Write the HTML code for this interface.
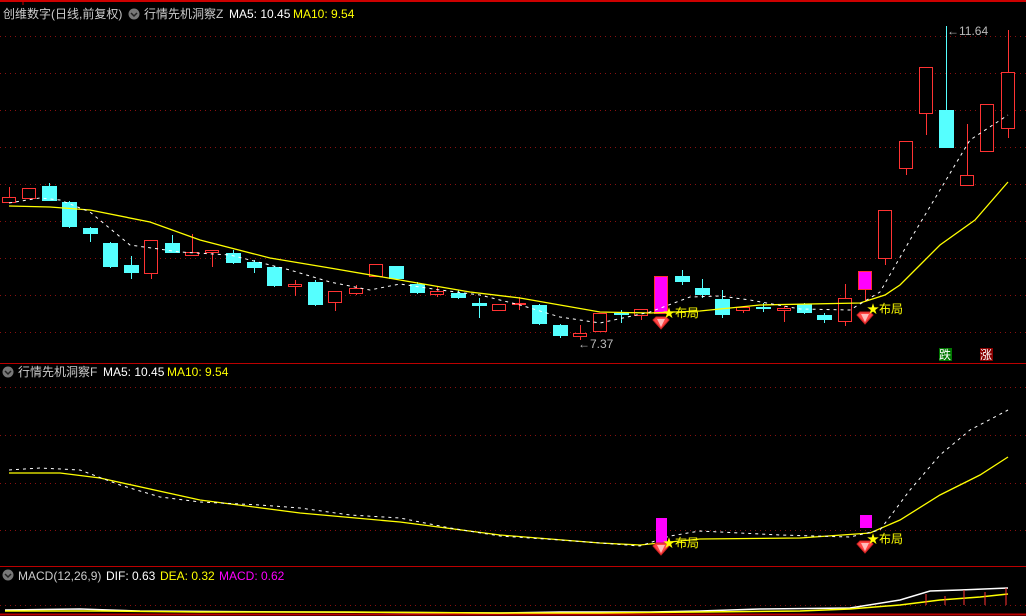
<!DOCTYPE html>
<html><head><meta charset="utf-8">
<style>
html,body{margin:0;padding:0;background:#000;width:1026px;height:616px;overflow:hidden;}
svg{display:block;}
text{font-family:"Liberation Sans","Noto Sans CJK SC",sans-serif;font-size:12px;}
</style></head><body>
<svg id="s" width="1026" height="616" xmlns="http://www.w3.org/2000/svg">
<rect width="1026" height="616" fill="#000"/>
<line x1="0" y1="1" x2="1026" y2="1" stroke="#c00" stroke-width="2"/>
<line x1="23" y1="0" x2="23" y2="5" stroke="#c00"/>
<g id="grid" stroke="#8a1010" stroke-dasharray="1,4"></g>
<line x1="0" y1="363.5" x2="1026" y2="363.5" stroke="#b00"/>
<line x1="0" y1="566.5" x2="1026" y2="566.5" stroke="#b00"/>
<line x1="0" y1="614.5" x2="1026" y2="614.5" stroke="#b00" stroke-width="2"/>
<g id="c"></g>
<polyline fill="none" stroke="#ff0" stroke-width="1.3" points="9,206 50,207 90,210 150,222 200,240 270,258 330,268 400,280 470,292 520,298 560,305 600,312 650,313 700,311 760,305 860,303 885,295 900,285 920,265 940,245 975,220 1008,182"/>
<polyline fill="none" stroke="#fff" stroke-dasharray="3,4" points="9,203 40,198 60,200 90,212 130,245 180,252 230,255 290,270 330,282 370,290 400,284 440,290 480,295 520,305 560,317 600,323 650,312 690,297 720,296 750,300 800,309 850,310 880,292 910,240 940,190 970,140 1008,115"/>
<polyline fill="none" stroke="#ff0" stroke-width="1.3" points="9,473 60,473 100,478 200,500 300,513 400,522 500,535 600,543 640,545 700,539 800,538 870,533 900,520 940,495 980,475 1008,457"/>
<polyline fill="none" stroke="#fff" stroke-dasharray="3,4" points="9,470 40,468 80,470 120,485 160,497 200,502 260,505 300,508 350,515 400,518 450,528 500,536 560,540 640,546 670,536 700,531 780,535 850,537 880,530 910,490 940,455 970,430 1008,410"/>
<rect x="656" y="518" width="11" height="25" fill="#f0f"/>
<rect x="860" y="515" width="12" height="13" fill="#f0f"/>
<g id="gems"></g>
<g fill="#ff0">
<text x="663" y="317" font-size="13">★布局</text>
<text x="867" y="313" font-size="13">★布局</text>
<text x="663" y="547" font-size="13">★布局</text>
<text x="867" y="543" font-size="13">★布局</text>
</g>
<text x="578" y="348" fill="#bbb">←7.37</text>
<text x="947" y="35" fill="#bbb">←11.64</text>
<rect x="939" y="348" width="13" height="13" fill="#070"/><text x="939" y="359" fill="#fff" font-size="12">跌</text>
<rect x="980" y="348" width="13" height="13" fill="#800"/><text x="980" y="359" fill="#fff" font-size="12">涨</text>
<circle cx="134" cy="14" r="5.5" fill="#777"/><path d="M131,13 l3,3 l3,-3" stroke="#222" stroke-width="1.5" fill="none"/>
<text x="3" y="18" fill="#ccc">创维数字(日线,前复权)</text>
<text x="144" y="18" fill="#ccc">行情先机洞察Z</text>
<text x="229" y="18" fill="#fff">MA5: 10.45</text>
<text x="293" y="18" fill="#ff0">MA10: 9.54</text>
<circle cx="8" cy="372" r="5.5" fill="#777"/><path d="M5,371 l3,3 l3,-3" stroke="#222" stroke-width="1.5" fill="none"/>
<text x="18" y="376" fill="#ccc">行情先机洞察F</text>
<text x="103" y="376" fill="#fff">MA5: 10.45</text>
<text x="167" y="376" fill="#ff0">MA10: 9.54</text>
<circle cx="8" cy="575" r="5.5" fill="#777"/><path d="M5,574 l3,3 l3,-3" stroke="#222" stroke-width="1.5" fill="none"/>
<text x="18" y="580" fill="#ccc">MACD(12,26,9)</text>
<text x="106" y="580" fill="#fff">DIF: 0.63</text>
<text x="160" y="580" fill="#ff0">DEA: 0.32</text>
<text x="219" y="580" fill="#f0f">MACD: 0.62</text>
<line x1="0" y1="605.5" x2="1026" y2="605.5" stroke="#8a1010" stroke-dasharray="1,4"/>
<polyline fill="none" stroke="#fff" stroke-width="1.5" points="5,610 80,609 140,611 300,612 500,613 560,612 650,612 700,611 760,609 850,608 900,600 930,591 960,590 1008,588"/>
<polyline fill="none" stroke="#ff0" stroke-width="1.5" points="5,611 100,611 200,612 350,612 500,613 600,613 700,612 800,611 850,609 900,605 940,600 980,597 1008,594"/>
<g stroke="#f33"><line x1="945" y1="596" x2="945" y2="605"/><line x1="964" y1="590" x2="964" y2="605"/><line x1="985" y1="592" x2="985" y2="605"/><line x1="1006" y1="588" x2="1006" y2="605"/><line x1="926" y1="594" x2="926" y2="605"/></g>
</svg>
<script>
var ns="http://www.w3.org/2000/svg";
function el(p,t,a){var e=document.createElementNS(ns,t);for(var k in a)e.setAttribute(k,a[k]);p.appendChild(e);return e;}
var g=document.getElementById('grid');
[36,73,110,147,184,221,258,295,332,387,435,483,530].forEach(function(y){el(g,'line',{x1:0,y1:y+.5,x2:1026,y2:y+.5});});
// x, top, bottom, high, low, type r=red hollow, c=cyan, m=magenta
var C=[[9,197,202,187,203,'r'],[29,188,198,188,198,'r'],[49,186,201,183,201,'c'],[69,202,227,201,228,'c'],[90,228,234,227,242,'c'],[110,243,267,242,268,'c'],[131,265,273,256,279,'c'],[151,240,273,240,279,'r'],[172,243,253,235,253,'c'],[192,252,255,234,256,'r'],[212,250,252,250,267,'r'],[233,253,263,250,264,'c'],[254,262,268,260,273,'c'],[274,267,286,266,287,'c'],[295,284,286,280,296,'r'],[315,282,305,280,306,'c'],[335,291,302,291,311,'r'],[356,288,293,285,295,'r'],[376,264,276,264,276,'r'],[396,266,279,266,280,'c'],[417,284,293,282,294,'c'],[437,291,294,286,297,'r'],[458,293,298,290,299,'c'],[479,303,306,298,318,'c'],[499,304,310,304,310,'r'],[519,303,304,297,310,'r'],[539,305,324,304,325,'c'],[560,325,336,324,338,'c'],[580,333,336,325,340,'r'],[600,313,331,313,331,'r'],[621,313,315,310,323,'c'],[641,309,315,309,320,'r'],[661,276,313,276,313,'m'],[682,276,282,270,285,'c'],[702,288,295,279,298,'c'],[722,299,315,290,318,'c'],[743,307,310,306,313,'r'],[763,307,309,303,312,'c'],[784,308,310,306,322,'r'],[804,304,313,303,314,'c'],[824,315,320,313,323,'c'],[845,298,321,284,326,'r'],[865,271,289,271,302,'m'],[885,210,258,210,265,'r'],[906,141,168,141,175,'r'],[926,67,113,67,135,'r'],[946,110,148,26,148,'c'],[967,175,185,124,185,'r'],[987,104,151,104,151,'r'],[1008,72,128,30,138,'r']];
var cg=document.getElementById('c');
C.forEach(function(d){var x=d[0],t=d[5];
 var col=t=='c'?'#5ff':'#f33';
 el(cg,'line',{x1:x+.5,y1:d[3],x2:x+.5,y2:d[4],stroke:col});
 if(t=='c')el(cg,'rect',{x:x-7,y:d[1],width:15,height:Math.max(1,d[2]-d[1]),fill:'#5ff'});
 else if(t=='m')el(cg,'rect',{x:x-6.5,y:d[1]+.5,width:13,height:d[2]-d[1],fill:'#f0f',stroke:'#f33'});
 else el(cg,'rect',{x:x-6.5,y:d[1]+.5,width:13,height:Math.max(1,d[2]-d[1]),fill:'#000',stroke:'#f33'});
});
var gg=document.getElementById('gems');
[[661,323],[865,318],[661,549],[865,547]].forEach(function(p){var x=p[0],y=p[1];
 el(gg,'path',{d:'M'+(x-8)+','+(y-3)+' l3,-3 h10 l3,3 l-8,9 z',fill:'#f44',stroke:'#c22'});
 el(gg,'path',{d:'M'+(x-4)+','+(y-4)+' h8 l-4,8 z',fill:'#fbb'});
});
</script>
</body></html>
